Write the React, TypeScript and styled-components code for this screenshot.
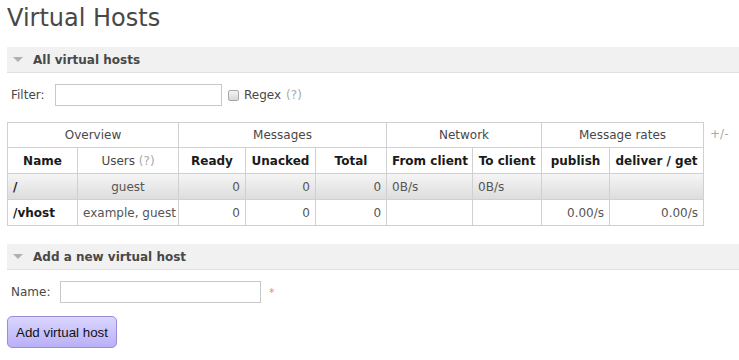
import React from 'react';
import styled, { createGlobalStyle } from 'styled-components';

const GlobalStyle = createGlobalStyle`
  body {
    margin: 0;
    background: #fff;
    font-family: "DejaVu Sans", Verdana, sans-serif;
    font-size: 12px;
    color: #484848;
  }
`;

const Page = styled.div`
  padding: 0 0 0 7px;
`;

const Title = styled.h1`
  margin: 0;
  padding-top: 2px;
  height: 45px;
  font-size: 24px;
  font-weight: normal;
  line-height: 32px;
  color: #484848;
`;

const SectionHeader = styled.h2`
  display: flex;
  align-items: center;
  gap: 10px;
  margin: 0;
  height: 25px;
  padding-left: 6px;
  background: #f1f1f1;
  border-bottom: 1px solid #e0e0e0;
  font-size: 12px;
  font-weight: bold;
  color: #484848;
`;

const Arrow = styled.span`
  width: 0;
  height: 0;
  border-left: 5px solid transparent;
  border-right: 5px solid transparent;
  border-top: 5px solid #b0b0b0;
`;

const FormRow = styled.div<{ $top: number; $bottom: number }>`
  display: flex;
  align-items: center;
  padding: ${(p) => p.$top}px 0 ${(p) => p.$bottom}px 4px;
`;

const Label = styled.label<{ $width: number }>`
  width: ${(p) => p.$width}px;
`;

const TextInput = styled.input<{ $width: number }>`
  box-sizing: border-box;
  width: ${(p) => p.$width}px;
  height: 22px;
  margin: 0;
  border: 1px solid #c8c8c8;
  background: #fff;
`;

const Check = styled.span`
  display: inline-block;
  box-sizing: border-box;
  width: 11px;
  height: 11px;
  margin: 0 5px 0 6px;
  border: 1px solid #a8a8a8;
  border-radius: 2px;
  background: linear-gradient(#f4f4f4, #d8d8d8);
`;

const Help = styled.span`
  color: #aaa;
  margin-left: 5px;
`;

const Required = styled.span`
  color: #f08080;
  margin-left: 8px;
  font-size: 11px;
`;

const TableWrap = styled.div`
  display: flex;
  align-items: flex-start;
  gap: 6px;
  margin-top: 16px;
`;

const PlusMinus = styled.span`
  color: #aaa;
  margin-top: 5px;
`;

const Table = styled.table`
  border-collapse: collapse;
  table-layout: fixed;
  width: 697px;
`;

const Th = styled.th<{ $group?: boolean }>`
  height: ${(p) => (p.$group ? 24 : 25)}px;
  padding: 0 5px;
  border: 1px solid #d0d0d0;
  font-weight: ${(p) => (p.$group ? 'normal' : 'bold')};
  color: ${(p) => (p.$group ? '#484848' : '#1a1a1a')};
  text-align: center;
  white-space: nowrap;
`;

const Tr = styled.tr<{ $alt?: boolean }>`
  background: ${(p) => (p.$alt ? 'linear-gradient(#f5f5f5, #dcdcdc)' : '#fff')};
`;

const Td = styled.td<{ $align?: string; $bold?: boolean }>`
  height: 25px;
  padding: 0 5px;
  border: 1px solid #d0d0d0;
  text-align: ${(p) => p.$align || 'right'};
  font-weight: ${(p) => (p.$bold ? 'bold' : 'normal')};
  color: ${(p) => (p.$bold ? '#1a1a1a' : '#555')};
  white-space: nowrap;
`;

const Spacer = styled.div<{ $h: number }>`
  height: ${(p) => p.$h}px;
`;

const SubmitButton = styled.button`
  width: 110px;
  height: 32px;
  padding: 0;
  border: 1px solid #978cd8;
  border-radius: 5px;
  background: linear-gradient(#dad6ff, #b9b0f8);
  font-family: "Liberation Sans", Arial, sans-serif;
  font-size: 13.33px;
  color: #111;
`;

const colWidths = [70, 101, 67, 70, 71, 86, 69, 68, 94];

const rows = [
  { name: '/', users: 'guest', ready: '0', unacked: '0', total: '0', from: '0B/s', to: '0B/s', publish: '', deliver: '' },
  { name: '/vhost', users: 'example, guest', ready: '0', unacked: '0', total: '0', from: '', to: '', publish: '0.00/s', deliver: '0.00/s' },
];

export default function App() {
  return (
    <Page>
      <GlobalStyle />
      <Title>Virtual Hosts</Title>
      <SectionHeader>
        <Arrow />
        All virtual hosts
      </SectionHeader>
      <FormRow $top={11} $bottom={0}>
        <Label $width={44}>Filter:</Label>
        <TextInput $width={167} />
        <Check />
        Regex<Help>(?)</Help>
      </FormRow>
      <TableWrap>
        <Table>
          <colgroup>
            {colWidths.map((w, i) => (
              <col key={i} style={{ width: w }} />
            ))}
          </colgroup>
          <thead>
            <tr>
              <Th $group colSpan={2}>Overview</Th>
              <Th $group colSpan={3}>Messages</Th>
              <Th $group colSpan={2}>Network</Th>
              <Th $group colSpan={2}>Message rates</Th>
            </tr>
            <tr>
              <Th>Name</Th>
              <Th $group>
                Users <Help style={{ marginLeft: 0 }}>(?)</Help>
              </Th>
              <Th>Ready</Th>
              <Th>Unacked</Th>
              <Th>Total</Th>
              <Th>From client</Th>
              <Th>To client</Th>
              <Th>publish</Th>
              <Th>deliver / get</Th>
            </tr>
          </thead>
          <tbody>
            {rows.map((r, i) => (
              <Tr key={r.name} $alt={i === 0}>
                <Td $align="left" $bold>{r.name}</Td>
                <Td $align="center">{r.users}</Td>
                <Td>{r.ready}</Td>
                <Td>{r.unacked}</Td>
                <Td>{r.total}</Td>
                <Td $align="left">{r.from}</Td>
                <Td $align="left">{r.to}</Td>
                <Td>{r.publish}</Td>
                <Td>{r.deliver}</Td>
              </Tr>
            ))}
          </tbody>
        </Table>
        <PlusMinus>+/-</PlusMinus>
      </TableWrap>
      <Spacer $h={18} />
      <SectionHeader>
        <Arrow />
        Add a new virtual host
      </SectionHeader>
      <FormRow $top={11} $bottom={13}>
        <Label $width={49}>Name:</Label>
        <TextInput $width={201} />
        <Required>*</Required>
      </FormRow>
      <SubmitButton>Add virtual host</SubmitButton>
    </Page>
  );
}
